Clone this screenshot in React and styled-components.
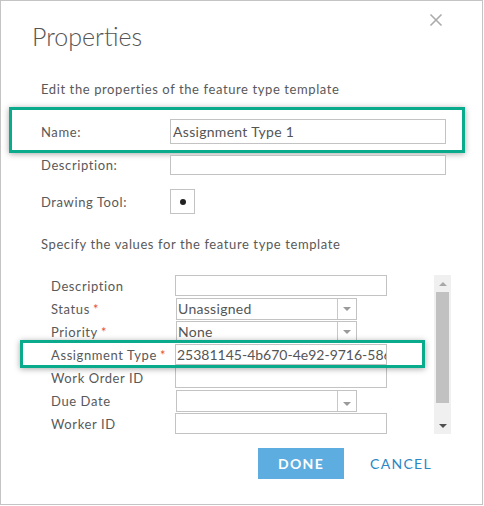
import React from "react";
import styled, { createGlobalStyle } from "styled-components";

const Global = createGlobalStyle`
  html, body { margin: 0; padding: 0; background: #fff; }
  body { font-family: Lato, "Open Sans", sans-serif; }
  * { box-sizing: border-box; }
`;

const GREEN = "#0aab8c";

const Dialog = styled.div`
  position: relative;
  width: 483px;
  height: 505px;
  border: 1px solid #c4c4c4;
  background: #fff;
  color: #595959;
  padding: 0 0 0 40px;
  display: flex;
  flex-direction: column;
`;

const Title = styled.h1`
  margin: 19px 0 0 -9px;
  font-size: 25px;
  line-height: 32px;
  font-weight: 300;
  color: #555;
`;

const Close = styled.button`
  position: absolute;
  top: 12px;
  right: 39px;
  width: 14px;
  height: 14px;
  padding: 0;
  border: 0;
  background: none;
  display: flex;
`;

const Hint = styled.p`
  margin: ${(p) => p.$top}px 0 0 0;
  font-size: 13px;
  line-height: 16px;
  letter-spacing: 0.6px;
  color: #595959;
`;

const FormRow = styled.div`
  position: relative;
  align-self: flex-start;
  display: grid;
  grid-template-columns: 129px 276px;
  align-items: center;
  margin-top: ${(p) => p.$top}px;
  font-size: 13px;
  line-height: 16px;
  letter-spacing: 0.6px;
  ${(p) =>
    p.$highlight &&
    `
    &::after {
      content: "";
      position: absolute;
      top: -12px;
      left: -32px;
      right: -19px;
      bottom: -9px;
      border: 3px solid ${GREEN};
      box-shadow: 0 1px 6px rgba(0,0,0,0.35);
      pointer-events: none;
    }
  `}
`;

const TextBox = styled.div`
  height: ${(p) => p.$h}px;
  border: 1px solid #c3c3c3;
  background: #fff;
  padding: 0 ${(p) => (p.$tight ? 1 : 2)}px;
  font-size: 14px;
  letter-spacing: ${(p) => (p.$tight ? 0 : 0.3)}px;
  line-height: ${(p) => p.$h - 2}px;
  color: #555;
  white-space: nowrap;
  overflow: hidden;
`;

const ToolBox = styled.div`
  width: 25px;
  height: 25px;
  border: 1px solid #c3c3c3;
  display: flex;
  align-items: center;
  justify-content: center;
`;

const Dot = styled.span`
  width: 6px;
  height: 6px;
  border-radius: 50%;
  background: #222;
`;

const ScrollArea = styled.div`
  margin-top: 23px;
  width: 410px;
  height: 159px;
  display: flex;
`;

const Rows = styled.div`
  flex: 1;
  padding-left: 10px;
  display: flex;
  flex-direction: column;
  gap: 2px;
`;

const AttrRow = styled.div`
  position: relative;
  align-self: flex-start;
  display: grid;
  grid-template-columns: 124px 212px;
  align-items: center;
  height: 21px;
  font-size: 13px;
  line-height: 16px;
  letter-spacing: 0.6px;
  ${(p) =>
    p.$highlight &&
    `
    &::after {
      content: "";
      position: absolute;
      top: -4px;
      left: -31px;
      right: -38px;
      bottom: -3px;
      border: 3px solid ${GREEN};
      box-shadow: 0 1px 6px rgba(0,0,0,0.35);
      pointer-events: none;
      z-index: 2;
    }
  `}
`;

const Req = styled.span`
  color: #e8542f;
  margin-left: 3px;
`;

const Select = styled.div`
  margin-left: 1px;
  width: 181px;
  height: 22px;
  border: 1px solid #c3c3c3;
  display: flex;
  font-size: 14px;
  letter-spacing: 0.3px;
  line-height: 20px;
  color: #555;
`;

const SelectValue = styled.span`
  flex: 1;
  padding-left: 1px;
  white-space: nowrap;
`;

const SelectArrow = styled.span`
  width: 19px;
  border-left: 1px solid #c8c8c8;
  display: flex;
  align-items: ${(p) => (p.$low ? "flex-end" : "center")};
  padding-bottom: ${(p) => (p.$low ? "5px" : "0")};
  justify-content: center;
  &::before {
    content: "";
    border-left: 4px solid transparent;
    border-right: 4px solid transparent;
    border-top: 4px solid #9a9a9a;
  }
`;

const Scrollbar = styled.div`
  width: 17px;
  background: #f0f0f0;
  display: flex;
  flex-direction: column;
  align-items: center;
`;

const ScrollBtn = styled.div`
  height: 17px;
  width: 17px;
  display: flex;
  align-items: center;
  justify-content: center;
  &::before {
    content: "";
    border-left: 4px solid transparent;
    border-right: 4px solid transparent;
    ${(p) =>
      p.$down
        ? "border-top: 4px solid #505050;"
        : "border-bottom: 4px solid #a8a8a8;"}
  }
`;

const Thumb = styled.div`
  width: 13px;
  height: 111px;
  background: #c1c1c1;
`;

const Spacer = styled.div`
  flex: 1;
`;

const Footer = styled.div`
  margin-top: 14px;
  padding-right: 50px;
  display: flex;
  justify-content: flex-end;
  align-items: center;
  gap: 26px;
`;

const Button = styled.button`
  height: 31px;
  padding: 0;
  border: 0;
  font-family: Lato, "Open Sans", sans-serif;
  font-size: 14px;
  letter-spacing: 1.3px;
  cursor: pointer;
  ${(p) =>
    p.$primary
      ? `width: 86px; background: #5dade0; color: #fff; font-weight: 700;`
      : `background: none; color: #2b86c5; font-weight: 400;`}
`;

const attrs = [
  { label: "Description", type: "text" },
  { label: "Status", req: true, type: "select", value: "Unassigned" },
  { label: "Priority", req: true, type: "select", value: "None" },
  {
    label: "Assignment Type",
    req: true,
    type: "text",
    value: "25381145-4b670-4e92-9716-586b0ae15e2f",
    highlight: true,
  },
  { label: "Work Order ID", type: "text" },
  { label: "Due Date", type: "select", value: "", low: true },
  { label: "Worker ID", type: "text" },
];

export default function App() {
  return (
    <>
      <Global />
      <Dialog>
        <Title>Properties</Title>
        <Close aria-label="Close">
          <svg width="14" height="14" viewBox="0 0 14 14">
            <path d="M1.5 1.5 L12.5 12.5 M12.5 1.5 L1.5 12.5" stroke="#ababab" strokeWidth="1.6" />
          </svg>
        </Close>
        <Hint $top={29}>Edit the properties of the feature type template</Hint>
        <FormRow $top={22} $highlight>
          <span>Name:</span>
          <TextBox $h={25}>Assignment Type 1</TextBox>
        </FormRow>
        <FormRow $top={11}>
          <span>Description:</span>
          <TextBox $h={20} />
        </FormRow>
        <FormRow $top={14}>
          <span>Drawing Tool:</span>
          <ToolBox>
            <Dot />
          </ToolBox>
        </FormRow>
        <Hint $top={22}>Specify the values for the feature type template</Hint>
        <ScrollArea>
          <Rows>
            {attrs.map((a) => (
              <AttrRow key={a.label} $highlight={a.highlight}>
                <span>
                  {a.label}
                  {a.req && <Req>*</Req>}
                </span>
                {a.type === "select" ? (
                  <Select>
                    <SelectValue>{a.value}</SelectValue>
                    <SelectArrow $low={a.low} />
                  </Select>
                ) : (
                  <TextBox $h={21} $tight={!!a.value}>
                    {a.value}
                  </TextBox>
                )}
              </AttrRow>
            ))}
          </Rows>
          <Scrollbar>
            <ScrollBtn />
            <Thumb />
            <Spacer />
            <ScrollBtn $down />
          </Scrollbar>
        </ScrollArea>
        <Footer>
          <Button $primary>DONE</Button>
          <Button>CANCEL</Button>
        </Footer>
      </Dialog>
    </>
  );
}
